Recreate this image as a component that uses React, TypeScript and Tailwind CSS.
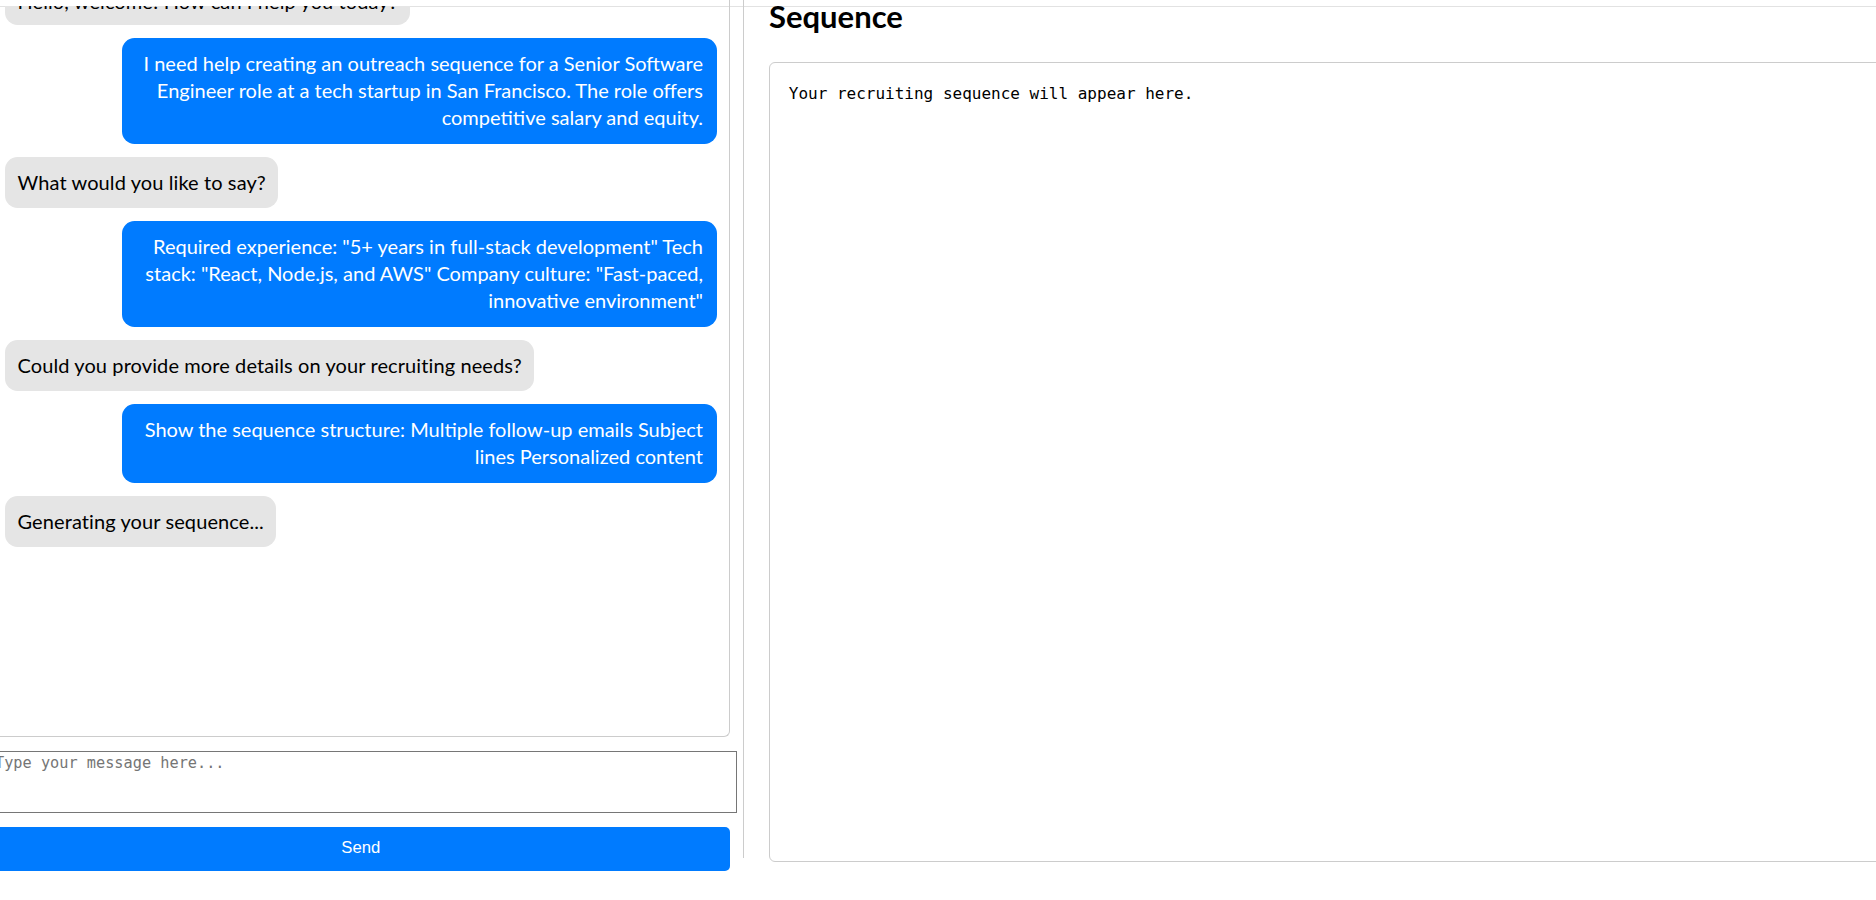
import { useState } from "react"

type Message = {
  from: "bot" | "user"
  lines: string[]
}

const messages: Message[] = [
  { from: "bot", lines: ["Hello, welcome! How can I help you today?"] },
  {
    from: "user",
    lines: [
      "I need help creating an outreach sequence for a Senior Software",
      "Engineer role at a tech startup in San Francisco. The role offers",
      "competitive salary and equity.",
    ],
  },
  { from: "bot", lines: ["What would you like to say?"] },
  {
    from: "user",
    lines: [
      'Required experience: "5+ years in full-stack development" Tech',
      'stack: "React, Node.js, and AWS" Company culture: "Fast-paced,',
      'innovative environment"',
    ],
  },
  { from: "bot", lines: ["Could you provide more details on your recruiting needs?"] },
  {
    from: "user",
    lines: [
      "Show the sequence structure: Multiple follow-up emails Subject",
      "lines Personalized content",
    ],
  },
  { from: "bot", lines: ["Generating your sequence..."] },
]

export default function App() {
  const [draft, setDraft] = useState("")

  return (
    <div className="h-[900px] w-full overflow-hidden bg-white font-['Lato',sans-serif] text-black">
      <div className="h-[6px]" />
      <div className="h-px w-full bg-[#e2e2e2]" />

      <div className="-ml-[8.5px] -mt-[7px] flex w-[1950px]">
        {/* Chat */}
        <div className="flex w-[738.5px] shrink-0 flex-col">
          <div className="flex h-[737px] flex-col rounded-b-[6px] border-x border-b border-[#cccccc]">
            <div className="h-[6px] shrink-0" />
            <div className="flex-1 overflow-hidden">
              <div className="-mt-[32.5px] flex flex-col gap-[13px] px-[12.5px]">
                {messages.map((m, i) =>
                  m.from === "bot" ? (
                    <div
                      key={i}
                      className={
                        i === 0
                          ? "self-start rounded-[12.5px] bg-[#e5e5e5] px-[12.5px] pt-[14.75px] pb-[9.75px] text-[20px] leading-[27px] tracking-[0.1px] whitespace-nowrap"
                          : "self-start rounded-[12.5px] bg-[#e5e5e5] px-[12.5px] py-[12.25px] text-[20px] leading-[27px] tracking-[0.1px] whitespace-nowrap"
                      }
                    >
                      {m.lines[0]}
                    </div>
                  ) : (
                    <div
                      key={i}
                      className="w-[595px] self-end rounded-[12.5px] bg-[#007bff] px-[13.5px] py-[12.25px] text-right text-[20px] leading-[27px] whitespace-nowrap text-white"
                    >
                      {m.lines.map((l, j) => (
                        <div key={j}>{l}</div>
                      ))}
                    </div>
                  )
                )}
              </div>
            </div>
          </div>

          <textarea
            value={draft}
            onChange={(e) => setDraft(e.target.value)}
            placeholder="Type your message here..."
            className="mt-[13.5px] block h-[62.6px] w-[745.5px] resize-none border border-[#767676] px-[2.5px] py-[2.5px] font-['DejaVu_Sans_Mono',monospace] text-[15.25px] leading-[19.5px] placeholder:text-[#757575] outline-none"
          />

          <button className="mt-[13.5px] h-[44.4px] w-full rounded-[5px] bg-[#007bff] pb-[2px] font-['Liberation_Sans',Arial,sans-serif] text-[16.7px] text-white">
            Send
          </button>
        </div>

        {/* divider */}
        <div className="ml-[13px] h-[858px] w-px shrink-0 bg-[#cccccc]" />

        {/* Sequence */}
        <div className="ml-[25px] w-[1150px] shrink-0">
          <h2 className="-mt-[3.8px] mb-[26.1px] h-[40px] text-[31px] leading-[40px] font-bold">Sequence</h2>
          <div className="h-[800px] rounded-[6px] border border-[#cccccc] p-[18.75px]">
            <pre className="pt-px font-['DejaVu_Sans_Mono',monospace] text-[16px] leading-[21px]">
              Your recruiting sequence will appear here.
            </pre>
          </div>
        </div>
      </div>
    </div>
  )
}
